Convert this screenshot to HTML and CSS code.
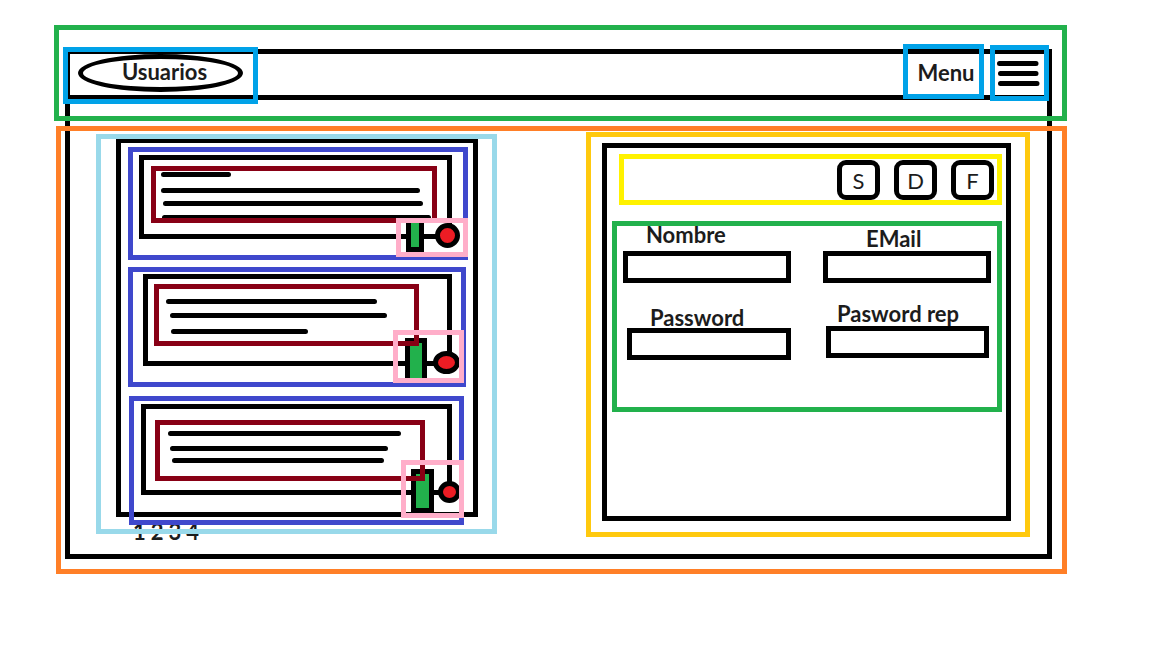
FILE: index.html
```html
<!DOCTYPE html>
<html lang="es">
<head>
<meta charset="utf-8">
<meta name="viewport" content="width=device-width, initial-scale=1">
<title>Usuarios</title>
<link rel="stylesheet" href="styles.css">
</head>
<body>
<div class="wireframe">
  <div class="window-frame"></div>
  <header class="header">
    <div class="box brand"><a class="brand-link" href="#">Usuarios</a></div>
    <div class="box menu"><a class="menu-link" href="#">Menu</a></div>
    <button class="box burger" type="button" aria-label="Abrir menu">
      <svg width="44" height="27" viewBox="0 0 44 27" stroke="#000" stroke-width="5" stroke-linecap="round"><path d="M3.500 3.500H40M4.500 13.500H40M4.500 23.500H41"/></svg>
    </button>
  </header>
  <main class="main">
    <section class="users" aria-label="Lista de usuarios">
      <div class="list-frame"></div>
      <article class="card card-first">
        <div class="card-body">
          <div class="card-text">
            <svg width="276" height="47" viewBox="0 0 276 47" stroke="#000" stroke-width="5" stroke-linecap="round"><path d="M7.500 3.500H72.500M7.500 19.500H261.500M9.500 32.500H264.500M8.500 46.500H272.500"/></svg>
          </div>
        </div>
        <div class="actions">
          <button class="edit" type="button" aria-label="Editar"></button>
          <button class="delete" type="button" aria-label="Eliminar"></button>
        </div>
      </article>
      <article class="card card-second">
        <div class="card-body">
          <div class="card-text">
            <svg width="255" height="52" viewBox="0 0 255 52" stroke="#000" stroke-width="5" stroke-linecap="round"><path d="M9.500 12.500H215.500M13.500 26.500H225.500M14.500 42.500H146.500"/></svg>
          </div>
        </div>
        <div class="actions">
          <button class="edit" type="button" aria-label="Editar"></button>
          <button class="delete" type="button" aria-label="Eliminar"></button>
        </div>
      </article>
      <article class="card card-third">
        <div class="card-body">
          <div class="card-text">
            <svg width="260" height="51" viewBox="0 0 260 51" stroke="#000" stroke-width="5" stroke-linecap="round"><path d="M10.500 8.500H238.500M12.500 23.500H225.500M14.500 35.500H221.500"/></svg>
          </div>
        </div>
        <div class="actions">
          <button class="edit" type="button" aria-label="Editar"></button>
          <button class="delete" type="button" aria-label="Eliminar"></button>
        </div>
      </article>
      <nav class="pages" aria-label="Paginas">
        <a href="#">1</a><a href="#">2</a><a href="#">3</a><a href="#">4</a>
      </nav>
    </section>
    <section class="detail" aria-label="Datos del usuario">
      <div class="detail-frame">
        <div class="toolbar">
          <button type="button">S</button>
          <button type="button">D</button>
          <button type="button">F</button>
        </div>
        <form class="form">
          <div class="field field-name"><label for="nombre">Nombre</label><input id="nombre" type="text"></div>
          <div class="field field-email"><label for="email">EMail</label><input id="email" type="email"></div>
          <div class="field field-pass"><label for="password">Password</label><input id="password" type="password"></div>
          <div class="field field-repeat"><label for="repeat">Pasword rep</label><input id="repeat" type="password"></div>
        </form>
      </div>
    </section>
  </main>
</div>
</body>
</html>
```
FILE: styles.css
```css
* {
  box-sizing: border-box;
}

body {
  margin: 0;
  background: #fff;
  color: #1c1c1c;
  font: bold 22px/24px Lato, "Open Sans", sans-serif;
}

a {
  color: inherit;
  text-decoration: none;
}

button {
  padding: 0;
  background: none;
  color: inherit;
  font: inherit;
}

svg {
  display: block;
}

.wireframe {
  position: relative;
  margin: 25px 85px 25px 54px;
}

/* Application window, drawn behind the coloured regions */
.window-frame {
  position: absolute;
  inset: 24px 15px 15px 11px;
  border: 5px solid #000;
}

.header {
  position: relative;
  display: flex;
  align-items: flex-start;
  gap: 6px;
  padding: 14px 13px 12px 4px;
  border: 5px solid #22b14c;
}

.header::before {
  content: "";
  position: absolute;
  top: 65px;
  left: 6px;
  right: 10px;
  height: 5px;
  background: #000;
}

.box {
  position: relative;
  border: 5px solid #00a2e8;
}

.brand {
  margin: 3px auto 0 0;
  padding: 2px 10px 7px;
}

.brand-link {
  display: block;
  width: 165px;
  padding: 1px 0 3px 8px;
  border: 5px solid #000;
  border-radius: 50%;
  text-align: center;
}

.menu {
  width: 81px;
  padding: 12px 0 9px 5px;
  text-align: center;
}

.burger {
  width: 59px;
  margin-top: 1px;
  padding: 10px 0 9px 1px;
}

.main {
  position: relative;
  display: grid;
  grid-template-columns: 401fr 444fr;
  gap: 89px;
  align-items: start;
  margin: 5px 0 0 2px;
  padding: 1px 32px 24px 35px;
  border: 5px solid #ff7f27;
}

.users {
  position: relative;
  isolation: isolate;
  margin-top: 2px;
  padding-top: 13px;
}

.users::after {
  content: "";
  position: absolute;
  inset: 0 0 11px;
  border: 5px solid #99d9ea;
  pointer-events: none;
}

.list-frame {
  position: absolute;
  inset: 4px 19px 28px 20px;
  border: 5px solid #000;
}

.card {
  position: relative;
  border: 5px solid #3f48cc;
}

.card-first {
  margin: 0 29px 7px 32px;
  padding: 3px 11px 16px 6px;
}

.card-second {
  margin: 0 31px 9px 32px;
  padding: 2px 9px 16px 10px;
}

.card-third {
  margin: 0 33px;
  padding: 3px 7px 25px;
}

.card-body {
  border: 5px solid #000;
}

.card-first .card-body {
  padding: 6px 10px 11px 7px;
}

.card-second .card-body {
  padding: 5px 28px 15px 6px;
}

.card-third .card-body {
  padding: 11px 22px 9px 9px;
}

.card-text {
  position: relative;
  z-index: 2;
  border: 5px solid #880015;
}

.card-first .card-text {
  overflow: hidden;
}

/* Action area over the lower right corner of each card */
.actions {
  position: absolute;
  display: flex;
  align-items: flex-start;
}

.actions::after {
  content: "";
  position: absolute;
  z-index: 3;
  inset: 0;
  border: 5px solid #ffaec9;
  pointer-events: none;
}

.actions button {
  position: relative;
  z-index: 1;
  border: 5px solid #000;
}

.actions .edit {
  background: #22b14c;
}

.actions .delete {
  border-radius: 50%;
  background: #ed1c24;
}

.card-first .actions {
  right: -5px;
  bottom: -2px;
  gap: 11px;
  width: 72px;
  height: 39px;
  padding: 5px 0 0 10px;
}

.card-first .edit {
  width: 18px;
  height: 29px;
}

.card-first .actions .edit {
  border-top-width: 0;
}

.card-first .delete {
  width: 25px;
  height: 25px;
}

.card-second .actions {
  right: -3px;
  bottom: -1px;
  gap: 6px;
  width: 71px;
  height: 53px;
  padding: 8px 0 0 12px;
}

.card-second .edit {
  width: 22px;
  height: 45px;
}

.card-second .delete {
  width: 27px;
  height: 23px;
  margin-top: 13px;
}

.card-third .actions {
  right: -5px;
  bottom: 2px;
  gap: 4px;
  width: 63px;
  height: 58px;
  padding: 9px 0 0 10px;
}

.card-third .edit {
  width: 23px;
  height: 44px;
}

.card-third .delete {
  width: 23px;
  height: 22px;
  margin-top: 12px;
}

.pages {
  display: flex;
  gap: 5px;
  padding: 0 0 6px 37px;
  line-height: 14px;
}

.detail {
  padding: 6px 14px 11px 11px;
  border: 5px solid #ffc90e;
}

.detail-frame {
  padding: 6px 4px 104px 5px;
  border: 5px solid #000;
}

.toolbar {
  display: flex;
  justify-content: flex-end;
  gap: 14px;
  margin-left: 7px;
  padding: 1px 3px 0;
  border: 5px solid #fff200;
}

.toolbar button {
  width: 43px;
  height: 40px;
  padding-top: 1px;
  border: 5px solid #000;
  border-radius: 9px;
  font-weight: normal;
}

.form {
  display: grid;
  grid-template-columns: 1fr 1fr;
  gap: 21px 32px;
  margin-top: 16px;
  padding: 0 6px 47px;
  border: 5px solid #22b14c;
}

.field {
  display: flex;
  flex-direction: column;
  justify-content: flex-end;
}

.field label {
  margin-bottom: 3px;
  line-height: 18px;
}

.field input {
  width: 100%;
  height: 32px;
  padding: 0 8px;
  border: 5px solid #000;
  border-radius: 0;
  background: #fff;
  color: inherit;
  font: inherit;
}

.field-name label {
  margin-bottom: 7px;
  padding-left: 23px;
}

.field-email label {
  padding-left: 43px;
}

.field-pass {
  padding: 5px 0 0 4px;
}

.field-pass label {
  margin-bottom: 1px;
  padding-left: 23px;
}

.field-repeat {
  padding: 0 2px 2px 3px;
}

.field-repeat label {
  padding-left: 11px;
}
```
